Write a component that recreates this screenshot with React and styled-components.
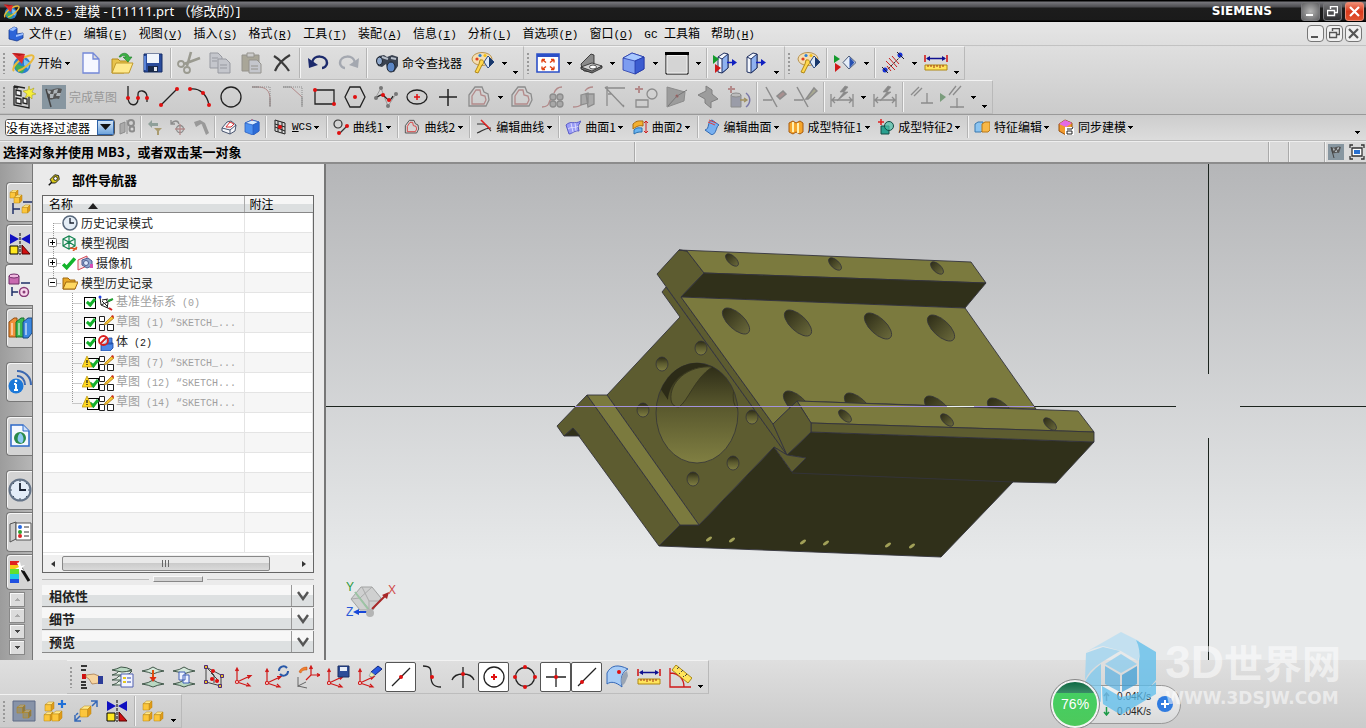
import React from "react";
import styled, { createGlobalStyle, css } from "styled-components";

const GlobalStyle = createGlobalStyle`
  *, *::before, *::after { box-sizing: border-box; }
  body { margin: 0; overflow: hidden; }
  button, select, input { font: inherit; color: inherit; margin: 0; }
  button { border: 0; background: none; padding: 0; }
`;

/* ---------- frame ---------- */
const Shell = styled.div`
  position: relative;
  display: flex;
  flex-direction: column;
  min-height: 100vh;
  background: #dcdcdc;
  color: #000;
  font: 12px/16px "Noto Sans CJK SC", "Liberation Sans", sans-serif;
`;
const TitleBar = styled.header`
  display: flex;
  align-items: center;
  height: 22px;
  padding: 0 2px 0 3px;
  color: #fff;
  background: linear-gradient(#000 0, #000 1px, #77777c 2px, #4c4c50 7px, #1c1c1c 8px, #1a1a1a 20px, #000 21px);
`;
const TitleText = styled.h1`
  flex: 1;
  margin: 0 0 0 4px;
  font: 13px/20px "Noto Sans", "Noto Sans CJK SC", sans-serif;
`;
const Brand = styled.span`
  margin-right: 26px;
  font: bold 12px/20px "DejaVu Sans", sans-serif;
`;
const WindowButton = styled.button`
  display: grid;
  place-items: center;
  width: 19px;
  height: 19px;
  margin-left: 3px;
  border: 1px solid ${(p) => (p.$close ? "#e88a74" : "#77777a")};
  border-radius: 3px;
  background: ${(p) =>
    p.$close
      ? "linear-gradient(#f08a70, #d93a1c 50%, #e0532f)"
      : p.$light
      ? "radial-gradient(#b5b5b5, #5e5e60)"
      : "linear-gradient(#77777a, #2e2e30)"};
`;
const MenuBar = styled.nav`
  display: flex;
  align-items: center;
  height: 24px;
  padding: 0 4px 0 3px;
  background: linear-gradient(#e6e6e6, #dedede);
  border-bottom: 1px solid #c2c2c2;
`;
const MenuItem = styled.button`
  height: 20px;
  margin-left: 11px;
  white-space: nowrap;
  &:first-of-type { margin-left: 5px; }
`;
const Latin = styled.span`
  font-family: "Liberation Mono", monospace;
  font-size: ${(p) => (p.$small ? 10 : 11)}px;
`;
const MdiButtons = styled.div`
  display: flex;
  gap: 2px;
  margin-left: auto;
`;
const MdiButton = styled.button`
  display: grid;
  place-items: center;
  width: 17px;
  height: 17px;
  border: 1px solid #777;
  border-radius: 4px;
  background: #f0f0f0;
`;

/* ---------- toolbars ---------- */
const ToolArea = styled.div`
  background: linear-gradient(#dfdfdf, #cbcbcb);
`;
const ToolRow = styled.div`
  display: flex;
  height: 34px;
  padding-left: ${(p) => (p.$inset ? 67 : 0)}px;
`;
const ToolGroup = styled.div`
  display: flex;
  align-items: stretch;
  padding-right: 3px;
  border-top: 1px solid #f2f2f2;
  border-right: 1px solid #b9b9b9;
  border-bottom: 1px solid #bdbdbd;
`;
const Grip = styled.i`
  flex: none;
  width: ${(p) => (p.$thin ? 5 : 8)}px;
  margin: 5px 0;
  background: radial-gradient(circle, #999 1px, transparent 1px) 2px 0 / 4px 4px repeat-y;
`;
const Rule = styled.i`
  flex: none;
  width: 5px;
  margin: 1px 0;
  background: linear-gradient(90deg, transparent 2px, #b4b4b4 2px 3px, #f4f4f4 3px 4px, transparent 4px);
`;
const ToolButton = styled.button`
  flex: none;
  display: flex;
  align-items: center;
  justify-content: center;
  gap: 3px;
  min-width: ${(p) => (p.$compact ? 23 : 31)}px;
  padding: 0 ${(p) => (p.$wide ? 5 : 0)}px 0 ${(p) => (p.$roomy ? 6 : p.$wide ? 3 : 0)}px;
  white-space: nowrap;
  ${(p) => p.$off && css`color: #999;`}
  ${(p) =>
    p.$pressed &&
    css`
      border: 1px solid #555;
      border-radius: 2px;
      background: #fff;
      margin: 1px 0;
    `}
`;
const CaretButton = styled.button`
  flex: none;
  display: flex;
  align-items: ${(p) => (p.$more ? "flex-end" : "center")};
  justify-content: center;
  width: ${(p) => (p.$more ? 10 : 12)}px;
  padding-bottom: ${(p) => (p.$more ? 5 : 0)}px;
`;
const CommandBar = styled.div`
  display: flex;
  height: 27px;
  padding: 0 4px 1px 5px;
  background: linear-gradient(#cdcdcd, #dcdcdc);
  border-top: 1px solid #999;
  border-bottom: 1px solid #bbb;
`;
const FilterBox = styled.div`
  display: flex;
  align-self: center;
  width: 110px;
  height: 17px;
  border: 1px solid #555;
  border-radius: 3px;
  background: #fff;
  overflow: hidden;
`;
const FilterSelect = styled.select`
  flex: 1;
  min-width: 0;
  padding: 0;
  border: 0;
  background: #fff;
  appearance: none;
  line-height: 15px;
`;
const FilterArrow = styled.span`
  display: grid;
  place-items: center;
  width: 17px;
  background: linear-gradient(#d3e5f6, #6fa4dc);
  border: 1px solid #2d62a8;
`;
const CommandButton = styled.button`
  flex: none;
  display: flex;
  align-items: center;
  padding: 0 2px 0 4px;
  gap: 4px;
  white-space: nowrap;
`;
const CaretSlot = styled.span`
  display: flex;
  justify-content: center;
  width: 10px;
  margin-left: -4px;
`;
const Spacer = styled.span`
  flex: 1;
`;
const PromptBar = styled.div`
  display: flex;
  height: 23px;
  background: #dadada;
  border-top: 1px solid #eee;
  border-bottom: 2px solid #8c8c8c;
`;
const Prompt = styled.p`
  width: 634px;
  margin: 0;
  padding-left: 3px;
  font-weight: bold;
  font-size: 13px;
  line-height: 20px;
  white-space: nowrap;
`;
const StatusCell = styled.div`
  display: flex;
  align-items: center;
  gap: 5px;
  ${(p) => (p.$grow ? "flex: 1;" : `width: ${p.$w}px;`)}
  border-left: 1px solid #aaa;
  box-shadow: inset 1px 0 #f0f0f0;
  padding-left: 3px;
`;

/* ---------- workspace ---------- */
const Workspace = styled.main`
  flex: 1;
  display: flex;
  min-height: 0;
`;
const Rail = styled.nav`
  display: flex;
  flex-direction: column;
  align-items: flex-end;
  flex: none;
  width: 33px;
  padding-top: 16px;
  background: linear-gradient(90deg, #9c9c9c, #b6b6b6);
  border-right: 1px solid #777;
`;
const RailTab = styled.button`
  flex: none;
  display: grid;
  place-items: center;
  width: ${(p) => (p.$active ? 28 : 26)}px;
  height: ${(p) => (p.$active ? 42 : p.$last ? 36 : 40)}px;
  margin-top: ${(p) => (p.$apart ? 14 : p.$active ? 0 : 2)}px;
  margin-right: ${(p) => (p.$active ? -1 : 0)}px;
  border: 1px solid #777;
  border-right: 0;
  border-radius: 4px 0 0 4px;
  background: ${(p) => (p.$active ? "#ebebeb" : "#d4d4d4")};
  box-shadow: inset 1px 1px #f5f5f5;
`;
const RailScroll = styled.div`
  display: flex;
  flex-direction: column;
  gap: 1px;
  margin: 2px 7px 0 0;
`;
const RailScrollButton = styled.button`
  display: grid;
  place-items: center;
  width: 16px;
  height: 15px;
  border: 1px solid #888;
  background: #dcdcdc;
  box-shadow: inset 1px 1px #f8f8f8;
`;
const Panel = styled.aside`
  display: flex;
  flex-direction: column;
  flex: none;
  width: 293px;
  padding: 0 10px 6px 9px;
  background: #ebebeb;
  border-right: 2px solid #777;
`;
const PanelTitle = styled.h2`
  display: flex;
  align-items: center;
  gap: 12px;
  height: 31px;
  margin: 0;
  padding: 1px 0 0 6px;
  font-size: 13px;
  line-height: 16px;
`;
const TreeBox = styled.div`
  flex: 1;
  display: flex;
  flex-direction: column;
  border: 1px solid #666;
  background: #fff;
`;
const TreeTable = styled.table`
  width: 100%;
  table-layout: fixed;
  border-collapse: collapse;
  th {
    height: 16px;
    padding: 0 0 0 6px;
    text-align: left;
    font-weight: normal;
    line-height: 16px;
    background: linear-gradient(#f6f6f6 50%, #dcdfe0 50%);
    border-right: 1px solid #aaa;
    border-bottom: 1px solid #888;
  }
  th:last-child { padding-left: 5px; border-right: 0; }
  th:first-child { width: 201px; }
  td {
    height: 20px;
    padding: 0;
    border-right: 1px solid #e4e4e4;
    border-bottom: 1px solid #e4e4e4;
    overflow: hidden;
  }
  tbody tr:nth-child(even) { background: #f6f6f6; }
`;
const TreeCell = styled.div`
  display: flex;
  align-items: center;
  gap: ${(p) => (p.$child ? 2 : 1)}px;
  height: 19px;
  white-space: nowrap;
  color: ${(p) => (p.$dim ? "#a0a0a0" : "#222")};
  svg { flex: none; }
`;
const TreeLabel = styled.span`
  padding-left: ${(p) => (p.$child ? 0 : 2)}px;
`;
const Check = styled.input`
  flex: none;
  appearance: none;
  position: relative;
  width: 12px;
  height: 12px;
  border: 1px solid #000;
  background: #fff;
  &:checked::after {
    content: "";
    position: absolute;
    left: 3px;
    top: -1px;
    width: 6px;
    height: 9px;
    border: solid #12b02a;
    border-width: 0 3px 3px 0;
    transform: rotate(40deg);
  }
`;
const Warned = styled.span`
  display: flex;
  align-items: flex-end;
  margin: 0 -3px 0 -2px;
  svg { margin-right: -6px; margin-bottom: 2px; z-index: 1; }
`;
const ScrollBar = styled.div`
  display: flex;
  align-items: center;
  height: 17px;
  margin-top: auto;
  background: #f0f0f0;
`;
const ScrollEnd = styled.button`
  display: grid;
  place-items: center;
  width: 19px;
  height: 16px;
`;
const ScrollThumb = styled.div`
  display: flex;
  align-items: center;
  justify-content: center;
  width: 208px;
  height: 15px;
  margin-right: auto;
  border: 1px solid #888;
  border-radius: 2px;
  background: linear-gradient(#e9e9e9 50%, #cbcbcb 50%, #dadada);
`;
const Splitter = styled.div`
  display: flex;
  align-items: center;
  gap: 4px;
  height: 12px;
  &::before, &::after { content: ""; flex: 1; height: 1px; background: #bbb; }
`;
const SplitterHandle = styled.span`
  width: 50px;
  height: 6px;
  background: #d3d3d3;
  border: 1px solid #999;
  border-color: #f8f8f8 #888 #888 #f8f8f8;
`;
const Section = styled.button`
  display: flex;
  align-items: stretch;
  height: 22px;
  margin-bottom: 1px;
  padding-left: 7px;
  font-weight: bold;
  font-size: 13px;
  line-height: 21px;
  text-align: left;
  color: #222;
  background: linear-gradient(#f7f7f7 50%, #dde0e1 50%);
  border-bottom: 1px solid #888;
  border-right: 1px solid #888;
`;
const SectionArrow = styled.span`
  display: grid;
  place-items: center;
  width: 22px;
  margin-left: auto;
  border-left: 1px solid #999;
`;
const Viewport = styled.section`
  flex: 1;
  min-width: 0;
  background: linear-gradient(#b5b6b8, #e7e9ea 80%);
`;
const Scene = styled.svg`
  display: block;
  width: 100%;
  height: 100%;
`;

/* ---------- floating overlays ---------- */
const Watermark = styled.div`
  position: absolute;
  right: 25px;
  bottom: 13px;
  display: flex;
  align-items: flex-end;
  gap: 8px;
  color: rgba(255, 255, 255, 0.55);
  pointer-events: none;
`;
const WatermarkText = styled.div`
  display: flex;
  flex-direction: column;
  padding-bottom: 9px;
`;
const WatermarkName = styled.span`
  font: bold 39px/50px "Liberation Sans", "Noto Sans CJK SC", sans-serif;
  white-space: nowrap;
  big { font-size: 46px; }
`;
const WatermarkUrl = styled.span`
  font: bold 17px/16px "DejaVu Sans", sans-serif;
`;
const SpeedWidget = styled.div`
  position: absolute;
  right: 185px;
  bottom: 0;
  display: flex;
  align-items: center;
`;
const SpeedBall = styled.div`
  z-index: 1;
  display: grid;
  place-items: center;
  width: 48px;
  height: 48px;
  border: 2px solid #f4f4f4;
  border-radius: 50%;
  outline: 1px solid #888;
  background: linear-gradient(#0e6a43 0, #3a8a66 24%, #45cf62 25%, #4dc95c 100%);
  color: #fff;
  font: 14px/16px "Liberation Sans", sans-serif;
`;
const SpeedPill = styled.div`
  display: flex;
  align-items: center;
  gap: 6px;
  height: 39px;
  margin-left: -12px;
  padding: 0 7px 0 15px;
  border: 1px solid #999;
  border-radius: 0 20px 20px 0;
  background: linear-gradient(#f1f1f1, #d9dadb);
  color: #222;
  font: 10px/15px "Liberation Sans", sans-serif;
`;
const SpeedLine = styled.div`
  display: flex;
  gap: 7px;
  align-items: center;
`;

/* ---------- icons ---------- */
const G = "#8c8c8c";
const R = "#b38a8a";
const dot = (x, y, c = "#e01010", r = 2) => <circle key={`${x}-${y}-${c}`} cx={x} cy={y} r={r} fill={c} stroke="none" />;
const cube = (x, y, s, a = "#ffe98c", b = "#fcc63c", c = "#e09a18") => (
  <g key={`${x}-${y}`} stroke="#b8840c" strokeWidth=".5">
    <path d={`M${x} ${y + s * 0.3}L${x + s * 0.4} ${y}H${x + s}L${x + s * 0.7} ${y + s * 0.3}Z`} fill={a} />
    <path d={`M${x} ${y + s * 0.3}H${x + s * 0.7}V${y + s}H${x}Z`} fill={b} />
    <path d={`M${x + s * 0.7} ${y + s * 0.3}L${x + s} ${y}V${y + s * 0.7}L${x + s * 0.7} ${y + s}Z`} fill={c} />
  </g>
);
const nxMark = (
  <>
    <circle cx="11" cy="14" r="8.500" fill="#2a7fd0" />
    <path d="M4 14c3-3 5 2 8 1s2 5-1 7c-4 0-7-4-7-8Z" fill="#3fae5a" />
    <path d="M13 8l6 4-2 6-4-4Z" fill="#7cc4f2" />
    <path d="M3 20C0 17 7 9 14 6s10-2 8 2-9 10-15 12" fill="none" stroke="#e9b93a" strokeWidth="2" />
    <path d="M1 2L14 3 11 13Z" fill="#e03030" />
    <path d="M1 2L14 3 8 5Z" fill="#b01818" />
  </>
);
const mirrorMark = (
  <>
    <path d="M2 2l9 5-9 5ZM22 2l-9 5 9 5Z" fill="#1010c0" />
    <path d="M12 1v22" stroke="#000" strokeDasharray="3 1" />
    <path d="M2 14h8v8H2Z" fill="#ffe820" stroke="#000" />
    <path d="M14 13l8 9h-8Z" fill="#d01010" stroke="#500" />
  </>
);
const ruler = (
  <>
    <path d="M1 4v7M23 4v7" stroke="#d01010" strokeWidth="1.500" />
    <path d="M3 7.500h18" stroke="#101090" strokeWidth="1.500" />
    <path d="M2 7.500l4-2.500v5ZM22 7.500l-4-2.500v5Z" fill="#101090" />
    <path d="M1 14h22v5H1Z" fill="#ffe45c" stroke="#b08810" />
    <path d="M4 14v2M7 14v2M10 14v3M13 14v2M16 14v3M19 14v2" stroke="#a03010" />
  </>
);
const role = (
  <>
    <ellipse cx="11" cy="8" rx="10" ry="6.500" fill="#f5deb0" stroke="#b8924c" />
    <circle cx="6" cy="8" r="1.600" fill="#e04020" />
    <circle cx="9" cy="4.500" r="1.600" fill="#2c80d8" />
    <circle cx="14" cy="4.500" r="1.600" fill="#f0c018" />
    <path d="M9 9c4-1 5 3 2 5l-4 8-3-1 4-8Z" fill="#ffd74c" stroke="#b08818" />
    <path d="M17 5l6 6-6 6-4-6Z" fill="#dce8f8" stroke="#2a4a80" />
    <path d="M18 6l5 5-5 5Z" fill="#18386c" />
  </>
);
const diamond = (
  <>
    <path d="M1 4l6 4-6 4Z" fill="#139a2c" />
    <path d="M2 12l6 4-6 5Z" fill="#d01818" />
    <path d="M16 5l7 6.500-7 6.500-6-6.500Z" fill="#e6eef8" stroke="#4a5a78" />
    <path d="M16.500 6v11l5-5.500Z" fill="#2850b0" />
  </>
);
const door = (
  <>
    <path d="M3 6L9 2l4 1v14l-6 5-4-1Z" fill="#f2f6fd" stroke="#203060" />
    <path d="M7 8l6-5v14l-6 5Z" fill="#8fb2f0" stroke="#203060" />
    <path d="M3 6l4 2" stroke="#203060" />
    <path d="M12 11.500h7" stroke="#1020c0" strokeWidth="1.500" />
    <path d="M17 8l5 3.500-5 3.500Z" fill="#1020c0" />
  </>
);
const offsetShape = (outer, inner) => (
  <>
    <path d="M2 10l6-8h7l2 5 4 2 1 6-3 6H2Z" fill="none" stroke={outer} strokeWidth="1.300" />
    <path d="M5 11l4-6h4l1 5 4 1 1 4-2 4H5Z" fill="none" stroke={inner} strokeWidth="1.300" />
  </>
);
const layers = (
  <g fill="#e3efe6" stroke="#41584a">
    <path d="M2 20q5-1 7-4h13q-2 4-8 4Z" />
    <path d="M2 15q5-1 7-4h13q-2 4-8 4Z" />
    <path d="M2 10q5-1 7-4h13q-2 4-8 4Z" />
    <path d="M2 5q5-1 9-3q6 0 11 3q-6 2-10 2Z" fill="#b9d8c2" />
  </g>
);
const planes = (
  <g fill="#d5e8da" stroke="#41584a">
    <path d="M1 6q7-1 11-4q4 3 11 4-7 1-11 3-4-2-11-3Z" />
    <path d="M1 19q7-1 11-4q4 3 11 4-7 1-11 3-4-2-11-3Z" fill="#b9d8c2" />
  </g>
);
const axes = (x = 3, y = 18) => (
  <g stroke="#d01818" fill="none" strokeWidth="1.200">
    <path d={`M${x} ${y}V${y - 13}M${x - 1.5} ${y - 11}l1.500-3 1.500 3M${x} ${y}l13-6M${x + 10} ${y - 6.500}l4 0-3 3M${x} ${y}l12 4M${x + 10} ${y + 1}l3 3-4 0`} />
    <circle cx={x} cy={y} r="1.500" fill="#fff" />
  </g>
);
const sketchMark = (
  <g fill="#fff" stroke="#222">
    <path d="M1.500 1.500h5v5h-5ZM1.500 9.500h5v6h-5ZM9.500 9.500h6v6h-6Z" />
    <path d="M7 8l7-7 2 2-7 6-3 1Z" fill="#f6c22c" stroke="#a07010" strokeWidth=".7" />
    <path d="M13 1l2-1 1 2-1 1Z" fill="#d02818" stroke="none" />
  </g>
);

const ICONS = {
  nx: nxMark,
  newFile: <path d="M4 2h10l6 6v14H4ZM14 2v6h6" fill="#f5f7ff" stroke="#7388d8" strokeWidth="1.300" />,
  open: (
    <>
      <path d="M2 8h6l2 2h8v4L14 22H2Z" fill="#e8c34c" stroke="#b48c1c" />
      <path d="M2 22L6 12h17l-4 10Z" fill="#ffe98c" stroke="#c09a2c" />
      <path d="M9 6c2-5 9-5 10 0h3l-4 5-5-5h3c-1-2-4-2-5 0Z" fill="#3cb044" stroke="#1c7c28" strokeWidth=".6" />
    </>
  ),
  save: (
    <>
      <path d="M3 3h18v18H3Z" fill="#2a4c9c" stroke="#142c66" />
      <path d="M6 3h12v9H6Z" fill="#f0f5fc" />
      <path d="M7 15h10v6H7Z" fill="#182848" />
      <path d="M13 16h3v4h-3Z" fill="#e4e8f0" />
      <path d="M3 5h2v14H3Z" fill="#5a84d8" />
    </>
  ),
  cut: (
    <g fill="none" stroke="#9a9a90" strokeWidth="1.800">
      <path d="M14 1L10 15M23 7L7 13" strokeWidth="2.600" />
      <circle cx="4" cy="13" r="3" />
      <circle cx="10" cy="19" r="3" />
    </g>
  ),
  copy: (
    <g fill="#c4c6cc" stroke="#9799a0">
      <path d="M2 2h8l4 4v11H2Z" />
      <path d="M10 8h8l4 4v10H10ZM12 14h7M12 17h7" />
      <path d="M4 7h6M4 10h5" />
    </g>
  ),
  paste: (
    <g stroke="#94928c">
      <path d="M3 4h17v16H3Z" fill="#a9a698" />
      <path d="M8 2h7v4H8Z" fill="#ccc" />
      <path d="M10 9h8l4 4v9H10Z" fill="#c4c6cc" />
      <path d="M12 15h7M12 18h7" />
    </g>
  ),
  erase: <path d="M4 5c5 3 12 10 15 15M20 4C13 8 8 13 5 20" fill="none" stroke="#3a3a3a" strokeWidth="2.200" />,
  undo: (
    <>
      <path d="M6 12c1-9 15-8 15 0 0 3-3 5-5 5" fill="none" stroke="#1c2a6c" strokeWidth="2.500" />
      <path d="M2 7l1 10 9-3Z" fill="#1c2a6c" />
    </>
  ),
  redo: (
    <>
      <path d="M18 12C17 3 3 4 3 12c0 3 3 5 5 5" fill="none" stroke="#a4a8b0" strokeWidth="2.500" />
      <path d="M22 7l-1 10-9-3Z" fill="#a4a8b0" />
    </>
  ),
  finder: (
    <>
      <path d="M1 9l3-4 5-1 3 2 5-2 6 2v9l-4 6-6-1-2-7-4 3-4-1Z" fill="#3a4250" />
      <ellipse cx="4.500" cy="10" rx="3" ry="4" fill="#8fa8cc" stroke="#1c222c" />
      <ellipse cx="16" cy="16" rx="4" ry="5" fill="#5c86c4" stroke="#1c222c" />
      <path d="M7 6l6 2M16 7l5 1" stroke="#b8c0cc" strokeWidth="2" />
    </>
  ),
  role,
  fit: (
    <>
      <path d="M1 3h22v18H1Z" fill="#fff" stroke="#2c50c8" strokeWidth="1.600" />
      <path d="M1 3h22v3H1Z" fill="#2c50c8" />
      <path d="M6 8.500h3M6 8.500v3M6 8.500l4 3M18 8.500h-3M18 8.500v3M18 8.500l-4 3M6 18.500h3M6 18.500v-3M6 18.500l4-3M18 18.500h-3M18 18.500v-3M18 18.500l-4-3" stroke="#e04010" strokeWidth="1.400" />
    </>
  ),
  orient: (
    <g stroke="#222" strokeWidth=".8">
      <path d="M2 13L12 3l3 1v10L3 17Z" fill="#8a8a8a" />
      <path d="M2 16l11-4 10 3-10 6-8-1Z" fill="#d0d0d0" />
      <path d="M2 16v2l11 4 10-5v-2l-10 5Z" fill="#777" />
      <ellipse cx="14" cy="16" rx="3.500" ry="2" fill="#fff" />
    </g>
  ),
  shaded: (
    <g stroke="#2438a8" strokeWidth=".8">
      <path d="M1 7l9-5 12 4v12l-9 5-12-4Z" fill="#7c9cf0" />
      <path d="M1 7l9-5 12 4-9 4Z" fill="#a8c8ff" />
      <path d="M13 10l9-4v12l-9 5Z" fill="#3c5cd0" />
    </g>
  ),
  frame: (
    <>
      <path d="M1 2h22v21H1Z" fill="#d4d4d4" stroke="#000" />
      <path d="M0 1h24v3H0Z" fill="#000" />
      <path d="M2 4.500h20v17.500H2Z" fill="none" stroke="#f2f2f2" />
    </>
  ),
  doorStart: (
    <>
      <g transform="translate(2 0)">{door}</g>
      <path d="M0 4l6 4-6 5Z" fill="#139a2c" />
      <path d="M2 13l6 4-6 5Z" fill="#d01818" />
    </>
  ),
  door,
  diamond,
  linearDim: (
    <>
      <path d="M4 21L21 4" stroke="#333" strokeDasharray="3 1" />
      <path d="M5 10l9 9M8 7l8 9M11 5l7 8M6 15l4 5" stroke="#c82020" />
      {dot(4, 19, "#1530d8", 2.5)}
      {dot(19, 4, "#1530d8", 2.5)}
      <path d="M1 16l6 6M16 1l7 7" stroke="#223" />
    </>
  ),
  ruler,
  sketch: (
    <>
      <path d="M2 2l4 1M2 1v19l15 3V12M2 1l11 2" fill="none" stroke="#222" strokeWidth="1.300" />
      <path d="M4 5l5 1v5l-5-1ZM11 13l4 1v5l-4-1ZM4 13l5 1v5l-5-1Z" fill="#f4f4f4" stroke="#222" strokeWidth="1.300" />
      <path d="M17 1l1 4 4-2-2 4 4 2-4 1 0 4-3-3-4 2 2-4-4-3 5-1Z" fill="#f6ef3a" stroke="#a8a020" strokeWidth=".6" />
    </>
  ),
  finish: (
    <>
      <path d="M0 0h24v24H0Z" fill="#8796a0" />
      <path d="M4 4c6 3 10-3 16 0l-3 10c-4-2-7 2-11 0Z" fill="#555" />
      <path d="M5 5l4 1-1 3-3-1ZM12 5l4-1-1 4-4 1ZM8 9l4 0-1 4-3 0ZM15 8l4 0-1 3-4 0Z" fill="#aeb4b8" />
      <path d="M4 4l5 18" stroke="#444" strokeWidth="1.500" />
    </>
  ),
  profile: (
    <>
      <path d="M2 1v11c0 10 10 10 10 2V9c0-5 9-4 9 3v5" fill="none" stroke="#222" strokeWidth="1.300" />
      {[[2, 13], [12, 13], [21, 13]].map(([x, y]) => dot(x, y))}
    </>
  ),
  line: <><path d="M4 20L20 4" stroke="#222" strokeWidth="1.300" />{dot(4, 20)}{dot(20, 4)}</>,
  arc: <><path d="M3 4c8-1 16 5 18 16" fill="none" stroke="#222" strokeWidth="1.300" />{dot(2, 4)}{dot(15, 8)}{dot(21, 20)}</>,
  circle: <circle cx="12" cy="12" r="10" fill="none" stroke="#222" strokeWidth="1.300" />,
  fillet: <g fill="none" stroke={G}><path d="M2 2h6c8 0 12 4 12 12v7" stroke={R} /><path d="M2 2h18v19" strokeDasharray="1 1" /><path d="M2 2h7M20 13v9" /></g>,
  chamfer: <g fill="none" stroke={G}><path d="M10 2l11 10" stroke={R} /><path d="M2 2h19v19" strokeDasharray="1 1" /><path d="M2 2h8M21 12v10" /></g>,
  rect: <><path d="M3 5h19v14H3Z" fill="none" stroke="#222" strokeWidth="1.300" />{dot(3, 5)}{dot(22, 19)}</>,
  polygon: <><path d="M7 2h10l5 10-5 10H7L2 12Z" fill="none" stroke="#222" strokeWidth="1.300" />{dot(12, 12)}</>,
  spline: (
    <>
      <path d="M2 12L7 3l3 8 4 10 8-12" fill="none" stroke="#999" />
      <path d="M2 13c4-3 5-4 8-2s5 8 9 0" fill="none" stroke="#222" strokeWidth="1.300" />
      {dot(2, 13, "#777")}{dot(7, 3, "#777")}{dot(14, 21, "#777")}{dot(22, 9, "#777")}{dot(9, 10)}{dot(15, 15)}
    </>
  ),
  ellipse: <><ellipse cx="12" cy="12" rx="10" ry="7" fill="none" stroke="#222" strokeWidth="1.300" /><path d="M12 9v6M9 12h6" stroke="#e01010" strokeWidth="1.500" /></>,
  point: <path d="M12 4v17M3 12h18" stroke="#222" strokeWidth="1.500" />,
  offset: offsetShape(G, R),
  pattern: (
    <g fill="none" stroke={G} strokeWidth="1.300">
      <path d="M1 22c10 0 5-8 11-9M13 8c2-5 5-6 8-6" stroke={R} />
      <circle cx="12" cy="12" r="3" fill="#a8a8a8" /><circle cx="19" cy="12" r="3" fill="#a8a8a8" /><circle cx="12" cy="19" r="3" fill="#a8a8a8" /><circle cx="19" cy="19" r="3" fill="#a8a8a8" />
    </g>
  ),
  project: <g fill="#aaa" stroke={G} strokeWidth="1.300"><path d="M1 22c8 0 10-3 10-8M13 6c2-3 5-4 8-4" fill="none" stroke={R} /><path d="M9 10l7-2v10l-7 2ZM14 9h8v10l-6 3Z" /></g>,
  intersect: <path d="M2 3h20M4 1v20M2 2l19 20M20 20l1 1M5 9h4" fill="none" stroke={G} strokeWidth="1.300" />,
  addCurve: <g fill="none" stroke={G} strokeWidth="1.300"><path d="M5 1v7M1 4h8" stroke={R} strokeWidth="2" /><circle cx="18" cy="9" r="5" /><path d="M2 15h12v7H2Z" /></g>,
  planeFill: <><path d="M2 2l18 5-1 9L2 22Z" fill="#9c9c9c" stroke={G} />{dot(12, 11, "#a05858", 1.5)}<path d="M12 11l-9 10M12 11l10-6" stroke="#777" /></>,
  planeCross: <path d="M2 10l8-4V1l6 4v4l6 5-7 3v6l-6-5v-4Z" fill="#9c9c9c" stroke="#808080" />,
  extrude: <g fill="#9a9ca8" stroke={G}><path d="M4 1v7M1 4h7" stroke={R} strokeWidth="2" /><path d="M4 10h10v12H4Z" /><ellipse cx="9" cy="10" rx="5" ry="2" fill="#bbb" /><path d="M13 15h6M17 13l3 2-3 2" fill="none" stroke="#a09060" strokeWidth="1.300" /><path d="M19 8c5 4 5 10 0 14" fill="none" stroke="#7a78a8" strokeWidth="1.500" /></g>,
  trim: <g fill="none" stroke={G} strokeWidth="1.500"><path d="M3 2l11 20M0 15h9" /><path d="M14 11l6-5 3 3-6 5Z" fill="#a89090" /></g>,
  trim2: <g fill="none" stroke={G} strokeWidth="1.500"><path d="M3 2l11 20M0 15h9" /><path d="M12 14L20 3l3 3-9 8Z" fill="#a8a890" /></g>,
  rapidDim: <g fill="none" stroke={G} strokeWidth="1.300"><path d="M1 9v13M23 9v13M2 15h20M5 12l-3 3 3 3M19 12l3 3-3 3" /><path d="M15 1l-5 6h4l-7 9 11-9h-4l4-5Z" fill="#888" strokeWidth=".7" /></g>,
  constraint: <path d="M2 10l8-8M5 11l8-8M18 8v10M12 18h12" stroke={G} strokeWidth="1.300" />,
  constraint2: <><path d="M0 8l6 4-6 5Z" fill="#7a9c7c" /><path d="M9 10l7-9M13 10l8-9M17 13v10M10 22h14" stroke={G} strokeWidth="1.300" /></>,
  /* snap and layer toolbar */
  snapList: <><path d="M2 1h6M2 5h5M2 17h5M2 20h5M2 23h6" stroke="#000" strokeWidth="1.500" /><path d="M3 9h4v5H3Z" fill="#d01010" /><path d="M7 10l8-1 5 2v7l-7 1-3-5-3-2Z" fill="#f6d4a0" stroke="#a07040" strokeWidth=".7" /><path d="M19 11h5v8h-5Z" fill="#2c3c98" /></>,
  layerList: <>{layers}<path d="M11 9h12v13H11Z" fill="#f2f4ff" stroke="#5060b0" /><path d="M13 12h3v2h-3ZM13 16h3v2h-3Z" fill="#e4c820" /><path d="M17 13h4M17 17h4" stroke="#3048a8" /></>,
  layerMove: <>{planes}<path d="M12 5v8" stroke="#e05010" strokeWidth="2" /><path d="M8.500 12h7L12 17Z" fill="#e03010" /></>,
  layerCopy: <>{planes}<path d="M7 7h6v8H7ZM11 10h6v8h-6Z" fill="#eef2ff" stroke="#4060b8" /></>,
  groupEdit: <><path d="M3 2v15l15 4V10ZM3 2l8 8v8M8 8l8 8" fill="none" stroke="#444" />{[[3, 2], [19, 11], [3, 17], [17, 21]].map(([x, y]) => <path key={y} d={`M${x - 1.500} ${y - 1.500}h3v3h-3Z`} fill="#e8c020" stroke="#502878" />)}{dot(10, 6)}{dot(9, 14)}{dot(14, 16)}</>,
  wcs: axes(3, 17),
  wcsRotate: <>{axes(2, 18)}<path d="M14 6a4.500 4.500 0 0 1 8-3M23 6a4.500 4.500 0 0 1-8 3" fill="none" stroke="#2858a8" strokeWidth="2" /></>,
  wcsMove: <><path d="M15 10V2M13.500 4L15 1l1.500 3M15 10h8M21 8.500l3 1.500-3 1.500M15 10l-5 5" fill="none" stroke="#d01818" strokeWidth="1.200" /><path d="M2 22V12M2 21l8-4M2 21l9 2" stroke="#666" /><path d="M3 7c1-3 4-5 8-5v3c-3 0-5 0-6 3Z" fill="#f08030" stroke="#c05010" strokeWidth=".5" /></>,
  wcsSave: <>{axes(2, 18)}<path d="M11 1h11v11H11Z" fill="#2c4c98" stroke="#182c60" /><path d="M13 2h7v4h-7Z" fill="#e8eef8" /></>,
  wcsShow: <>{axes(2, 18)}<path d="M13 7l7-6 4 3-7 6Z" fill="#2858e0" stroke="#102880" /><path d="M13 7l4 3-3 2-3-1Z" fill="#e8f0b0" stroke="#8090a0" strokeWidth=".6" /></>,
  snapEnd: <><path d="M3 21L21 3" stroke="#222" strokeWidth="1.300" />{dot(12, 12)}</>,
  snapMid: <><path d="M3 1c8 0 8 3 8 10s2 11 10 11" fill="none" stroke="#222" strokeWidth="1.300" />{dot(12, 12)}</>,
  snapCross: <><path d="M1 15c3-8 19-8 22 0M12 2v21" fill="none" stroke="#222" strokeWidth="1.300" />{dot(12, 9)}</>,
  snapCenter: <><circle cx="12" cy="12" r="10" fill="none" stroke="#222" strokeWidth="1.300" /><path d="M12 9v6M9 12h6" stroke="#e01010" strokeWidth="2" /></>,
  snapQuad: <><circle cx="12" cy="12" r="9.500" fill="none" stroke="#222" strokeWidth="1.300" />{dot(12, 2)}{dot(12, 22)}{dot(2, 12)}{dot(22, 12)}</>,
  snapPoint: <><path d="M12 3v19M2 12h20" stroke="#222" strokeWidth="1.300" />{dot(12, 12)}</>,
  snapCurve: <><path d="M3 21L21 3" stroke="#222" strokeWidth="1.300" />{dot(7, 17)}</>,
  snapFace: <><path d="M1 8C5 0 12-1 22 4c-6 3-8 9-6 18C10 17 5 16 1 19Z" fill="#a9cdf6" stroke="#3468b8" /><path d="M16 21c-2-8 0-12 5-15l1 5-3 7Z" fill="#9aa5b4" />{dot(13, 7)}</>,
  angle: <><path d="M2 3v19h21M2 8c9 0 14 6 14 14" fill="none" stroke="#d01818" strokeWidth="1.300" /><path d="M8 0l16 13-4 5L4 5Z" fill="#ffe45c" stroke="#a88818" /><path d="M9 4l2-2M13 7l2-2M17 11l2-2M11 9l1-1M15 12l1-1" stroke="#444" /></>,
  /* assembly toolbar */
  asmFind: <><path d="M1 2h22v20H1Z" fill="#8793a8" stroke="#5e6a86" />{cube(5, 6, 8, "#aaa48c", "#989070", "#807858")}{cube(11, 11, 8, "#aaa48c", "#989070", "#807858")}</>,
  asmAdd: <>{cube(2, 3, 9)}{cube(1, 13, 9)}{cube(9, 12, 10)}<path d="M19 1v8M15 5h8" stroke="#2070d8" strokeWidth="2.200" /></>,
  asmMove: <>{cube(6, 7, 11)}<path d="M1 16v6h6M1 22l5-5M4 14l-2 2M17 2h6v6M23 2l-5 5" fill="none" stroke="#3468b8" strokeWidth="1.500" /></>,
  mirror: mirrorMark,
  asm: <>{cube(2, 2, 9)}{cube(2, 13, 9)}{cube(13, 13, 9)}</>,
  /* resource rail */
  railAsm: <>{cube(2, 0, 8)}{cube(6, 5, 8)}{cube(14, 15, 8)}<path d="M5 13v11M5 19h7M15 12h9" stroke="#203068" strokeWidth="1.500" /></>,
  railPart: <><path d="M1 3h10v8H1Z" fill="#c86ab0" stroke="#702c68" /><ellipse cx="6" cy="3" rx="5" ry="2" fill="#f0b8e0" stroke="#702c68" /><path d="M13 10h9M4 14v9M4 19h6" stroke="#203068" strokeWidth="1.500" /><circle cx="16" cy="19" r="4.500" fill="#f8d8ec" stroke="#883c78" strokeWidth="1.500" /><circle cx="16" cy="19" r="1.500" fill="#883c78" /></>,
  railBooks: <><path d="M1 6l5-4h3v19H1Z" fill="#f09038" stroke="#904c10" /><path d="M8 6l5-4h3v19H8Z" fill="#3cb850" stroke="#186c28" /><path d="M15 6l5-4h4v15l-4 5h-5Z" fill="#3c88e0" stroke="#184880" /><path d="M4 7v12M11 7v12M18 7v12" stroke="#fff" /></>,
  railInfo: <><circle cx="8" cy="16" r="7.500" fill="#1c78d8" /><path d="M8 14v6M6 14h2M6 20h4" stroke="#fff" strokeWidth="2" /><circle cx="8" cy="11" r="1.300" fill="#fff" /><path d="M9 6c5 0 8 4 8 9M9 1c8 0 14 6 14 14" fill="none" stroke="#3c68b0" strokeWidth="2" /></>,
  railWeb: <><path d="M3 1h12l6 6v15H3Z" fill="#f4f8ff" stroke="#2c68c8" strokeWidth="1.500" /><path d="M15 1v6h6" fill="#cfe0f8" stroke="#2c68c8" /><circle cx="12" cy="14" r="6" fill="#2a8a4a" /><path d="M12 9c3 1 5 7 2 10-6 0-5-7-2-10Z" fill="#8ccaf2" /></>,
  railClock: <><circle cx="12" cy="12" r="10.500" fill="#e4edf8" stroke="#657488" strokeWidth="2" /><path d="M12 5v7h6" fill="none" stroke="#182030" strokeWidth="1.800" /><path d="M12 2v2M12 20v2M2 12h2M20 12h2M5 5l1 1M18 18l1 1M19 5l-1 1M5 19l1-1" stroke="#456" /></>,
  railRoles: <><path d="M2 4l6-2v17l-6 3Z" fill="#ccc" stroke="#555" /><path d="M8 3h15v17H8Z" fill="#fff" stroke="#555" />{dot(12, 7, "#2868e0")}{dot(12, 12, "#30a030")}{dot(12, 16, "#e02828")}<path d="M16 7h5M16 12h5M16 16h5" stroke="#333" /></>,
  railVisual: <><path d="M2 1h9v4H2Z" fill="#e02020" /><path d="M2 5h9v4H2Z" fill="#f8c818" /><path d="M2 9h9v5H2Z" fill="#60e030" /><path d="M2 14h9v5H2Z" fill="#20c8e8" /><path d="M2 19h9v4H2Z" fill="#2050e0" /><path d="M13 8l8 13" stroke="#111" strokeWidth="3" /><path d="M12 2l1 4 4-1-3 3 3 3-4-1-1 4-1-5-4 0 4-2-2-4Z" fill="#fff" /></>,
  /* 16px set */
  part: <><path d="M1 4l5-3 3 1v6l6-1v5l-6 3-8-2Z" fill="#2c64d8" stroke="#173a90" strokeWidth=".8" /><path d="M1 4l5-3 3 1-4 3ZM8 9l7-2v2l-7 2Z" fill="#9cc0ff" /></>,
  chain: <g stroke={G} fill="#aaa"><path d="M1 5l5-2v10l-5 2ZM8 1v14" /><circle cx="12" cy="4" r="3" fill="none" strokeWidth="2" /><circle cx="13" cy="10" r="2.500" fill="none" strokeWidth="2" /></g>,
  selUp: <g fill="#8fa09a"><path d="M1 5l4-4v3h6v3H5v2Z" /><path d="M7 9h8l-3 3v4h-2v-4Z" fill="#aa9c70" /></g>,
  selTarget: <g fill="none" stroke={G} strokeWidth="1.300"><path d="M1 1v4h4M1 5c3-4 7-4 8 0" /><circle cx="10" cy="10" r="3.500" /><path d="M10 5v11M5 10h10" stroke={R} /></g>,
  selHammer: <g fill="#999"><path d="M1 3l6-2 5 3v3L8 5 3 8ZM9 6l3-2 4 10-3 2Z" /></g>,
  wireBox: <g stroke="#4a5670" fill="#f4f6fa"><path d="M1 9l5-6 4-1 5 4-1 6-5 3-8-3Z" /><path d="M1 9l8 2 6-5M9 11v4" fill="none" /><path d="M5 8l4-5 4 2-3 3Z" fill="#fff" stroke="#d83030" /></g>,
  blueBox: <g stroke="#2c60c0" strokeWidth=".8"><path d="M1 4l7-3 7 2v9l-6 4-8-3Z" fill="#4c90f0" /><path d="M1 4l7-3 7 2-6 3Z" fill="#d8ecff" /><path d="M9 6v10l6-4V3Z" fill="#2c6cd8" /><path d="M8 0v2" stroke="#e04848" /></g>,
  grid: <g fill="none" stroke="#222"><path d="M3 1l10 3v11L3 12ZM3 5l10 3M3 8l10 4M6 2v11M10 3v11" />{dot(8, 8)}</g>,
  curve1: <g fill="none" stroke="#333" strokeWidth="1.200"><circle cx="5" cy="5" r="4" /><path d="M7 14l7-7" />{dot(14, 7)}{dot(6, 14)}</g>,
  curve2: <svg viewBox="0 0 24 24" width="16" height="16">{offsetShape("#444", "#d83838")}</svg>,
  editCurve: <g fill="none" stroke="#333" strokeWidth="1.200"><path d="M1 5h6c4 0 5 4 8 7M1 14c5-1 6-5 14-5" /><path d="M5 1l9 9" stroke="#e02020" strokeWidth="1.600" /></g>,
  face1: <><path d="M1 6c5-5 8 0 15-4l-3 5 1 5c-4-1-7 3-10 3Z" fill="#9a9cf6" stroke="#5a5cc8" /><path d="M3 10c4-3 7 0 10-3M6 4l2 9M10 4l1 8" stroke="#dcdcff" /></>,
  face2: <><path d="M1 5c4-4 7-3 10-3v5c-3-1-6 0-10 3Z" fill="#f4b030" stroke="#a86c10" /><path d="M2 11c3-3 5-2 8-2v4c-3 0-5 0-8 2Z" fill="#6ab4f0" stroke="#2870b0" /><path d="M14 2v12M12 4l2-2 2 2M12 12l2 2 2-2" stroke="#d02020" fill="none" /></>,
  editFace: <><path d="M1 11c5-1 2-9 7-10l7 5c-3 1-2 8-7 10Z" fill="#78b0f0" stroke="#3068b0" /><path d="M5 1l7 3M4 3l7 3" stroke="#e04040" /></>,
  form1: <><path d="M1 4l4-2 3 2 4-2 3 2v9l-3 2-4-2-3 2-4-2Z" fill="#f6a62c" stroke="#a85c10" /><path d="M5 3v10M10 4v10" stroke="#fff0b0" strokeWidth="2" /></>,
  form2: <><path d="M3 7h8v8H3Z" fill="#2aa090" stroke="#124c44" /><circle cx="11" cy="7" r="4.500" fill="#4cc0a8" fillOpacity=".7" stroke="#124c44" /><path d="M3 0v6M0 3h6" stroke="#e02020" strokeWidth="1.500" /></>,
  featEdit: <><path d="M1 5l3-2h5v8l-2 2H1Z" fill="#8cc4f0" stroke="#3878b0" /><path d="M8 5l3-2h5v8l-2 2H8Z" fill="#f8b848" stroke="#b87818" /></>,
  sync: <><path d="M1 5l6-4 7 3v8l-6 4-7-4Z" fill="#f29a2c" stroke="#98500c" /><path d="M1 5l6-4 7 3-6 4Z" fill="#e46ae4" /><path d="M7 8h9v8H7Z" fill="#fff" /><path d="M9 12h5v3H9ZM9 10h5l1-2" fill="none" stroke="#222" /></>,
  flag: <><path d="M0 0h16v16H0Z" fill="#8796a0" /><path d="M3 3c4 2 6-2 10 0l-2 6c-3-1-5 1-7 0Z" fill="#555" /><path d="M5 4l2 1-1 2-1-1ZM9 4l2-1 0 2-2 1ZM7 7l2-1 0 2-2 0Z" fill="#aeb4b8" /><path d="M3 3l3 11" stroke="#444" /></>,
  fullscreen: <g fill="none" stroke="#333" strokeWidth="1.300"><path d="M1 4V1h3M12 1h3v3M15 12v3h-3M4 15H1v-3" /><path d="M3 4h10v8H3Z" fill="#fff" /><path d="M5 6h6v4H5Z" fill="#2870d0" stroke="none" /></g>,
  pin: <g stroke="#111" strokeWidth="1.200"><path d="M1 15l4-4" strokeWidth="1.800" /><path d="M3 7l6-6 5 1 1 5-5 5-5 0Z" fill="#d8c818" /><circle cx="10" cy="6" r="2.500" fill="#fff" /></g>,
  clock: <><circle cx="8" cy="8" r="7" fill="#e4edf6" stroke="#58687c" strokeWidth="1.600" /><path d="M8 3v5h4" fill="none" stroke="#182030" strokeWidth="1.300" /></>,
  modelView: <g fill="none" stroke="#148450" strokeWidth="1.200"><path d="M1 4l6-3 6 3v7l-6 3-6-3ZM1 4l6 3 6-3M7 1v13M1 11l6-4 6 4" /><path d="M8 13l7 1M15 12l-4 4" stroke="#e05020" strokeWidth="1.500" /></g>,
  camera: <><path d="M1 5l9-4v10l-9 4Z" fill="#f8e4e8" stroke="#d04858" /><path d="M5 5l6-2 4 3v5l-5 2-5-3Z" fill="#8ea4cc" stroke="#4c5c90" /><circle cx="9" cy="8" r="2.500" fill="#dce8fa" stroke="#4c5c90" /><path d="M13 9h3v4h-3Z" fill="#d850b8" /></>,
  tick: <path d="M1 7l3 3 7-8" fill="none" stroke="#14b42c" strokeWidth="3" />,
  folder: <g stroke="#a06810"><path d="M1 3h5l2 2h5v9H1Z" fill="#e8a828" /><path d="M1 14L4 7h12l-3 7Z" fill="#ffd860" /></g>,
  csys: <g fill="none" stroke="#222"><path d="M2 2l1 8 9 4M3 10l11-5M4 5l6-1M4 6l6 6M8 4l2 4-1 5" /><path d="M10 6l5-2" stroke="#20a030" strokeWidth="2" /><path d="M11 13l3 2" stroke="#d02020" strokeWidth="2" />{dot(2, 2, "#2040e0", 1.5)}</g>,
  sketchRow: sketchMark,
  body: <><path d="M3 10l3-2h9v5l-3 3H3ZM8 5l3-2h3v6H8Z" fill="#4c88e8" stroke="#1c4498" strokeWidth=".8" /><circle cx="5.500" cy="5.500" r="4.500" fill="#fff" fillOpacity=".6" stroke="#d82020" strokeWidth="1.800" /><path d="M2.500 8.500l6-6" stroke="#d82020" strokeWidth="1.800" /></>,
};

const Icon = ({ name, size = 24, box = size }) => (
  <svg width={size} height={size} viewBox={`0 0 ${box} ${box}`} fill="none" aria-hidden="true">
    {ICONS[name]}
  </svg>
);
const Triangle = ({ up, color = "#000" }) => (
  <svg width="5" height="3" viewBox="0 0 5 3" shapeRendering="crispEdges" aria-hidden="true">
    <path d={up ? "M2 0h1v1h1v1h1v1H0V2h1V1h1Z" : "M0 0h5v1H4v1H3v1H2V2H1V1H0Z"} fill={color} />
  </svg>
);

/* ---------- data ---------- */
const MENUS = [
  ["文件", "F"], ["编辑", "E"], ["视图", "V"], ["插入", "S"], ["格式", "R"], ["工具", "T"], ["装配", "A"],
  ["信息", "I"], ["分析", "L"], ["首选项", "P"], ["窗口", "O"], ["工具箱", null, "GC "], ["帮助", "H"],
];
/* "|" is a divider, "v" a drop-down arrow, "more" the overflow arrow */
const STANDARD = [
  ["nx:开始", "newFile", "open", "save", "|", "cut", "copy", "paste", "erase", "|", "undo", "redo", "|", "finder:命令查找器", "role", "v", "more"],
  ["fit", "v", "orient", "v", "shaded", "v", "frame", "v", "|", "doorStart", "door", "more"],
  ["role", "|", "diamond", "v", "|", "linearDim", "v", "ruler", "more"],
];
const SKETCH = [
  [
    "sketch", "finish:完成草图", "profile", "line", "arc", "circle", "fillet", "chamfer", "rect", "polygon", "spline", "ellipse",
    "point", "offset", "v", "offset", "pattern", "project", "intersect", "addCurve", "planeFill", "planeCross", "extrude", "|",
    "trim", "trim2", "|", "rapidDim", "v", "rapidDim", "|", "constraint", "constraint2", "v", "more",
  ],
];
const SNAP = [
  [
    "snapList", "layerList", "layerMove", "layerCopy", "groupEdit", "wcs", "wcsRotate", "wcsMove", "wcsSave", "wcsShow", "snapEnd*",
    "snapMid", "snapCross", "snapCenter*", "snapQuad", "snapPoint*", "snapCurve*", "snapFace", "ruler", "angle", "more",
  ],
];
const ASSEMBLY = [["asmFind", "asmAdd", "asmMove", "mirror", "|", "asm", "more"]];
const COMMANDS = [
  ["grid", "WCS"], "|", ["curve1", "曲线1"], "|", ["curve2", "曲线2"], "|", ["editCurve", "编辑曲线"], "|", ["face1", "曲面1"],
  ["face2", "曲面2"], "|", ["editFace", "编辑曲面"], ["form1", "成型特征1"], ["form2", "成型特征2"], "|", ["featEdit", "特征编辑"], ["sync", "同步建模"],
];
const TREE = [
  { icon: "clock", text: "历史记录模式" },
  { icon: "modelView", text: "模型视图", sign: "+" },
  { icon: "camera", text: "摄像机", sign: "+", tick: true },
  { icon: "folder", text: "模型历史记录", sign: "-" },
  { child: true, icon: "csys", text: "基准坐标系", tail: " (0)", dim: true },
  { child: true, icon: "sketchRow", text: "草图", tail: " (1) “SKETCH_...", dim: true },
  { child: true, icon: "body", text: "体", tail: " (2)" },
  { child: true, icon: "sketchRow", text: "草图", tail: " (7) “SKETCH_...", dim: true, warn: true },
  { child: true, icon: "sketchRow", text: "草图", tail: " (12) “SKETCH...", dim: true, warn: true },
  { child: true, icon: "sketchRow", text: "草图", tail: " (14) “SKETCH...", dim: true, warn: true, end: true },
];
const EMPTY_ROWS = 7;
const RAIL = [
  { icon: "railAsm" }, { icon: "mirror" }, { icon: "railPart", active: true }, { icon: "railBooks" }, { icon: "railInfo", apart: true },
  { icon: "railWeb", apart: true }, { icon: "railClock", apart: true }, { icon: "railRoles" }, { icon: "railVisual", last: true },
];

/* ---------- composed parts ---------- */
function Tools({ items }) {
  return items.map((item, i) => {
    if (item === "|") return <Rule key={i} />;
    if (item === "v" || item === "more")
      return (
        <CaretButton key={i} $more={item === "more"} aria-label="更多">
          <Triangle />
        </CaretButton>
      );
    const [raw, label] = item.split(":");
    const name = raw.replace("*", "");
    return (
      <ToolButton key={i} $wide={!!label} $roomy={name === "finder"} $off={name === "finish"} $pressed={raw !== name} aria-label={label || name}>
        <Icon name={name} />
        {label}
        {name === "nx" && <Triangle />}
      </ToolButton>
    );
  });
}
const Toolbar = ({ groups, inset }) => (
  <ToolRow $inset={inset}>
    {groups.map((items, i) => (
      <ToolGroup key={i}>
        <Grip />
        <Tools items={items} />
      </ToolGroup>
    ))}
  </ToolRow>
);

function Guide({ row, index }) {
  const dash = { stroke: "#999", strokeDasharray: "1 1" };
  if (row.child)
    return (
      <svg width="39" height="20" viewBox="0 0 39 20">
        <path d={`M29.500 0V${row.end ? 10 : 20}M29.500 10.500h9`} {...dash} />
      </svg>
    );
  return (
    <svg width="18" height="20" viewBox="0 0 18 20">
      <path d={`M10.500 ${index === 0 ? 10 : 0}V${row.sign === "-" ? 10 : 20}M10.500 10.500h8`} {...dash} />
      {row.sign && (
        <>
          <rect x="5.500" y="5.500" width="8" height="8" rx="1" fill="#fff" stroke="#777" />
          <path d={row.sign === "+" ? "M7 9.500h5M9.500 7v5" : "M7 9.500h5"} stroke="#000" />
        </>
      )}
    </svg>
  );
}

function TreeRow({ row, index }) {
  const box = <Check type="checkbox" defaultChecked aria-label={row.text} />;
  return (
    <tr>
      <td>
        <TreeCell $child={row.child} $dim={row.dim}>
          <Guide row={row} index={index} />
          {row.child &&
            (row.warn ? (
              <Warned>
                <svg width="11" height="12" viewBox="0 0 11 12">
                  <path d="M5 0l5 11H0Z" fill="#ffd820" stroke="#b89410" strokeWidth=".7" />
                  <path d="M5 4v3M5 8v1" stroke="#222" strokeWidth="1.300" />
                </svg>
                {box}
              </Warned>
            ) : (
              box
            ))}
          {row.tick && <Icon name="tick" size={14} box={12} />}
          <Icon name={row.icon} size={16} />
          <TreeLabel $child={row.child}>
            {row.text}
            {row.tail && <Latin $small>{row.tail}</Latin>}
          </TreeLabel>
        </TreeCell>
      </td>
      <td />
    </tr>
  );
}

const Hole = ({ x, y, rx, ry, turn = 0, fill = "url(#bore)" }) => (
  <ellipse cx={x} cy={y} rx={rx} ry={ry} fill={fill} stroke="#333338" strokeWidth=".8" transform={`rotate(${turn} ${x} ${y})`} />
);

function ModelView() {
  return (
    <Scene viewBox="326 164 1040 496" preserveAspectRatio="xMinYMin slice" role="img" aria-label="模型">
      <defs>
        <linearGradient id="bore" x1="0" y1="0" x2="0" y2="1">
          <stop offset="0" stopColor="#2b2a16" />
          <stop offset=".45" stopColor="#5a592e" />
          <stop offset="1" stopColor="#807f42" />
        </linearGradient>
        <linearGradient id="slot" x1="0" y1="0" x2="1" y2="0">
          <stop offset="0" stopColor="#2f2e18" />
          <stop offset="1" stopColor="#69683a" />
        </linearGradient>
        <clipPath id="mouth"><ellipse cx="697" cy="413" rx="41" ry="50" /></clipPath>
      </defs>
      <g stroke="#1c241e" strokeWidth="1">
        <path d="M326 406.500H1176M1240 406.500H1366" />
        <path d="M1208.500 164V374M1208.500 438V660" />
      </g>
      <g stroke="#33333c" strokeWidth=".9" strokeLinejoin="round">
        <path fill="#30301a" d="M699 525L774 447 792 472 806 458 787 455 811 432 1094 442 1056 483 1013 482 941 557 659 546 680 525Z" />
        <path fill="#5d5c30" d="M680 317L607 395 699 525 774 447 787 455 666 287 662 292Z" />
        <path fill="#5d5c30" d="M679 250L687 251 704 273 681 297 773 424 787 455 657 274Z" />
        <path fill="#7b7a3e" d="M679 250L971 262 986 283 704 273 687 251Z" />
        <path fill="#30301a" d="M704 273L986 283 965 308 681 297Z" />
        <path fill="#7b7a3e" d="M681 297L965 308 1036 409 797 401 773 424Z" />
      </g>
      {[[736, 321], [798, 323], [878, 326], [941, 328], [797, 404], [858, 406], [938, 409], [1001, 411]].map(([x, y]) => (
        <Hole key={x} x={x} y={y} rx={17} ry={8} turn={43} fill="url(#slot)" />
      ))}
      <g stroke="#33333c" strokeWidth=".9" strokeLinejoin="round">
        <path fill="#7b7a3e" d="M797 401L1078 411 1094 432 811 423Z" />
        <path fill="#5d5c30" d="M811 423L1094 432 1094 442 811 432Z" />
        <path fill="#5d5c30" d="M773 424L797 401 811 423V432L787 455Z" />
        <path fill="#5d5c30" d="M787 455L806 458 792 472 774 447Z" />
        <path fill="none" d="M792 473L1013 482" />
        <path fill="#5d5c30" d="M557 426L587 395 680 525 659 546 573 428 564 436Z" />
        <path fill="#30301a" d="M564 436L573 428 580 436Z" />
        <path fill="#7b7a3e" d="M587 395H607L699 525H680Z" />
      </g>
      {[[732, 260], [835, 264], [937, 268], [845, 416], [947, 420], [1050, 424]].map(([x, y]) => (
        <Hole key={x} x={x} y={y} rx={8} ry={4} turn={43} fill="url(#slot)" />
      ))}
      {[[701, 348], [662, 364], [643, 410], [752, 417], [733, 463], [693, 479]].map(([x, y]) => (
        <Hole key={x} x={x} y={y} rx={6} ry={7} />
      ))}
      <Hole x={697} y={413} rx={41} ry={50} />
      <g clipPath="url(#mouth)">
        <path d="M668 400C669 380 688 364 712 367L697 362Q672 364 660 388Z" fill="#2c2b17" />
        <path d="M671 400C669 382 688 365 712 367C695 378 688 401 679 407Q672 407 671 400Z" fill="#5e5d31" stroke="#3a3922" />
        <path d="M734 388Q731 404 738 409" fill="none" stroke="#3a3922" />
      </g>
      {[[709, 539], [732, 540], [803, 542], [826, 543], [888, 545], [912, 546]].map(([x, y]) => (
        <ellipse key={x} cx={x} cy={y} rx="3.500" ry="1.400" fill="#a1a058" transform={`rotate(-35 ${x} ${y})`} />
      ))}
      <path d="M575 406.500H947M974 406.500H1034" stroke="#a493dc" />
      <path d="M947 406.500H974" stroke="#e9eef4" />
      <g strokeWidth="1">
        <path d="M351 599l10-12h11l9 11-8 12h-13Z" fill="#cfd0d0" stroke="#a2a3a3" />
        <path d="M351 599l9-1 12-11M360 598l9 11M369 601h12M362 587l7 14v9" fill="none" stroke="#aaabab" />
        <path d="M368 609L355 592" stroke="#9cc4a4" strokeWidth="2" />
        <path d="M372 609L386 595" stroke="#a82828" strokeWidth="2" />
        <path d="M389 592l-2 7-5-4Z" fill="#a82828" />
        <path d="M370 612H358" stroke="#1848d8" strokeWidth="2" />
        <path d="M353 612l6-3v6Z" fill="#1848d8" />
        <circle cx="370" cy="613" r="4" fill="#b4b5b5" />
      </g>
      <g fontFamily="Liberation Sans, sans-serif" fontSize="12">
        <text x="346" y="591" fill="#2c9a3c">Y</text>
        <text x="388" y="594" fill="#d04848">X</text>
        <text x="346" y="616" fill="#2858d8">Z</text>
      </g>
    </Scene>
  );
}

const LogoHex = () => (
  <svg width="72" height="83" viewBox="0 0 72 83" opacity=".75" aria-hidden="true">
    <path d="M36 0L54 9Q56 20 53 29L36 19 18 14Q8 16 1 20Z" fill="#b8def2" />
    <path d="M51 8L71 20V48Q64 57 54 63V29Q56 18 51 8Z" fill="#5bbdec" />
    <path d="M71 50V62L36 83 18 72Q17 62 17 54L36 65Q58 62 71 50Z" fill="#5bbdec" />
    <path d="M1 21L18 15 35 19 17 30Q4 38 0 48Z" fill="#9bd3f0" />
    <path d="M0 50Q5 40 16 32V70L0 62Z" fill="#7ac8ee" />
    <path d="M36 22L52 32 36 41 20 32Z" fill="#8accee" />
    <path d="M20 34L35 43V60L20 52Z" fill="#62b4e2" />
    <path d="M52 34L37 43V60L52 52Z" fill="#3f9fd6" />
  </svg>
);

const Restore = ({ color }) => (
  <svg width="11" height="11" viewBox="0 0 11 11" fill="none" stroke={color} aria-hidden="true">
    <path d="M3.500 3V.5h7v6H8" strokeWidth="1.400" />
    <path d="M.5 4.500h7v5h-7Z" strokeWidth="1.400" />
  </svg>
);
const Minus = ({ color }) => (
  <svg width="11" height="11" viewBox="0 0 11 11" aria-hidden="true"><path d="M1 8h7v2H1Z" fill={color} /></svg>
);
const Cross = ({ color }) => (
  <svg width="11" height="11" viewBox="0 0 11 11" aria-hidden="true"><path d="M1 1l9 9M10 1l-9 9" stroke={color} strokeWidth="2.200" /></svg>
);

export default function App() {
  return (
    <>
      <GlobalStyle />
      <Shell>
        <TitleBar>
          <Icon name="nx" size={17} box={24} />
          <TitleText>NX 8.5 - 建模 - [11111.prt （修改的）]</TitleText>
          <Brand>SIEMENS</Brand>
          <WindowButton $light aria-label="最小化"><Minus color="#fff" /></WindowButton>
          <WindowButton aria-label="还原"><Restore color="#fff" /></WindowButton>
          <WindowButton $close aria-label="关闭"><Cross color="#fff" /></WindowButton>
        </TitleBar>

        <MenuBar>
          <Grip $thin />
          <Icon name="part" size={16} />
          {MENUS.map(([label, key, lead]) => (
            <MenuItem key={label}>
              {lead && <Latin>{lead}</Latin>}
              {label}
              {key && <Latin>(<u>{key}</u>)</Latin>}
            </MenuItem>
          ))}
          <MdiButtons>
            <MdiButton aria-label="最小化"><Minus color="#555" /></MdiButton>
            <MdiButton aria-label="还原"><Restore color="#555" /></MdiButton>
            <MdiButton aria-label="关闭"><Cross color="#555" /></MdiButton>
          </MdiButtons>
        </MenuBar>

        <ToolArea>
          <Toolbar groups={STANDARD} />
          <Toolbar groups={SKETCH} />
        </ToolArea>

        <CommandBar>
          <FilterBox>
            <FilterSelect aria-label="选择过滤器">
              <option>没有选择过滤器</option>
            </FilterSelect>
            <FilterArrow>
              <svg width="11" height="6" viewBox="0 0 11 6" aria-hidden="true"><path d="M0 0h11L5.500 6Z" fill="#111" /></svg>
            </FilterArrow>
          </FilterBox>
          <ToolButton $compact aria-label="链"><Icon name="chain" size={16} /></ToolButton>
          <Rule />
          {["selUp", "selTarget", "selHammer"].map((n) => (
            <ToolButton key={n} $compact aria-label={n}><Icon name={n} size={16} /></ToolButton>
          ))}
          <Rule />
          {["wireBox", "blueBox"].map((n) => (
            <ToolButton key={n} $compact aria-label={n}><Icon name={n} size={16} /></ToolButton>
          ))}
          <Rule />
          {COMMANDS.map((c, i) =>
            c === "|" ? (
              <Rule key={i} />
            ) : (
              <CommandButton key={i}>
                <Icon name={c[0]} size={16} />
                {c[1] === "WCS" ? <Latin><u>W</u>CS</Latin> : c[1]}
                <CaretSlot><Triangle /></CaretSlot>
              </CommandButton>
            )
          )}
          <Spacer />
          <CaretButton $more aria-label="更多"><Triangle /></CaretButton>
        </CommandBar>

        <PromptBar>
          <Prompt>选择对象并使用 MB3，或者双击某一对象</Prompt>
          <StatusCell $grow />
          <StatusCell $w={20} />
          <StatusCell $w={36} />
          <StatusCell $w={42}>
            <Icon name="flag" size={16} />
            <Icon name="fullscreen" size={16} />
          </StatusCell>
        </PromptBar>

        <Workspace>
          <Rail>
            {RAIL.map((t) => (
              <RailTab key={t.icon} $active={t.active} $apart={t.apart} $last={t.last} aria-label={t.icon}>
                <Icon name={t.icon} />
              </RailTab>
            ))}
            <RailScroll>
              <RailScrollButton aria-label="首页"><Triangle up color="#aaa" /></RailScrollButton>
              <RailScrollButton aria-label="上移"><Triangle up color="#aaa" /></RailScrollButton>
              <RailScrollButton aria-label="下移"><Triangle color="#444" /></RailScrollButton>
              <RailScrollButton aria-label="末页"><Triangle color="#444" /></RailScrollButton>
            </RailScroll>
          </Rail>

          <Panel>
            <PanelTitle>
              <Icon name="pin" size={12} box={16} />
              部件导航器
            </PanelTitle>
            <TreeBox>
              <TreeTable>
                <thead>
                  <tr>
                    <th>
                      名称{" "}
                      <svg width="22" height="6" viewBox="0 0 22 6" aria-hidden="true"><path d="M12 6h10L17 0Z" fill="#222" /></svg>
                    </th>
                    <th>附注</th>
                  </tr>
                </thead>
                <tbody>
                  {TREE.map((row, i) => <TreeRow key={i} row={row} index={i} />)}
                  {Array.from({ length: EMPTY_ROWS }, (_, i) => (
                    <tr key={`e${i}`}><td /><td /></tr>
                  ))}
                </tbody>
              </TreeTable>
              <ScrollBar>
                <ScrollEnd aria-label="向左"><svg width="4" height="6" viewBox="0 0 4 6"><path d="M4 0v6L0 3Z" fill="#333" /></svg></ScrollEnd>
                <ScrollThumb>
                  <svg width="8" height="7" viewBox="0 0 8 7"><path d="M.5 0v7M3.500 0v7M6.500 0v7" stroke="#666" /></svg>
                </ScrollThumb>
                <ScrollEnd aria-label="向右"><svg width="4" height="6" viewBox="0 0 4 6"><path d="M0 0v6l4-3Z" fill="#333" /></svg></ScrollEnd>
              </ScrollBar>
            </TreeBox>
            <Splitter><SplitterHandle /></Splitter>
            {["相依性", "细节", "预览"].map((s) => (
              <Section key={s}>
                {s}
                <SectionArrow>
                  <svg width="12" height="10" viewBox="0 0 12 10" aria-hidden="true"><path d="M1 1l5 7 5-7" fill="none" stroke="#555" strokeWidth="2.400" /></svg>
                </SectionArrow>
              </Section>
            ))}
          </Panel>

          <Viewport><ModelView /></Viewport>
        </Workspace>

        <ToolArea>
          <Toolbar groups={SNAP} inset />
          <Toolbar groups={ASSEMBLY} />
        </ToolArea>

        <SpeedWidget>
          <SpeedBall>76%</SpeedBall>
          <SpeedPill>
            <div>
              <SpeedLine>
                <svg width="7" height="9" viewBox="0 0 7 9"><path d="M3.500 9V2M1 4l2.500-3L6 4" fill="none" stroke="#888" strokeWidth="1.500" /></svg>
                0.04K/s
              </SpeedLine>
              <SpeedLine>
                <svg width="7" height="9" viewBox="0 0 7 9"><path d="M3.500 0v7M1 5l2.500 3L6 5" fill="none" stroke="#1c9a48" strokeWidth="1.500" /></svg>
                0.04K/s
              </SpeedLine>
            </div>
            <svg width="16" height="16" viewBox="0 0 16 16" aria-hidden="true">
              <circle cx="8" cy="8" r="8" fill="#2f7be0" />
              <path d="M8 4v8M4 8h8" stroke="#fff" strokeWidth="2" />
            </svg>
          </SpeedPill>
        </SpeedWidget>
        <Watermark>
          <LogoHex />
          <WatermarkText>
            <WatermarkName><big>3D</big>世界网</WatermarkName>
            <WatermarkUrl>WWW.3DSJW.COM</WatermarkUrl>
          </WatermarkText>
        </Watermark>
      </Shell>
    </>
  );
}
